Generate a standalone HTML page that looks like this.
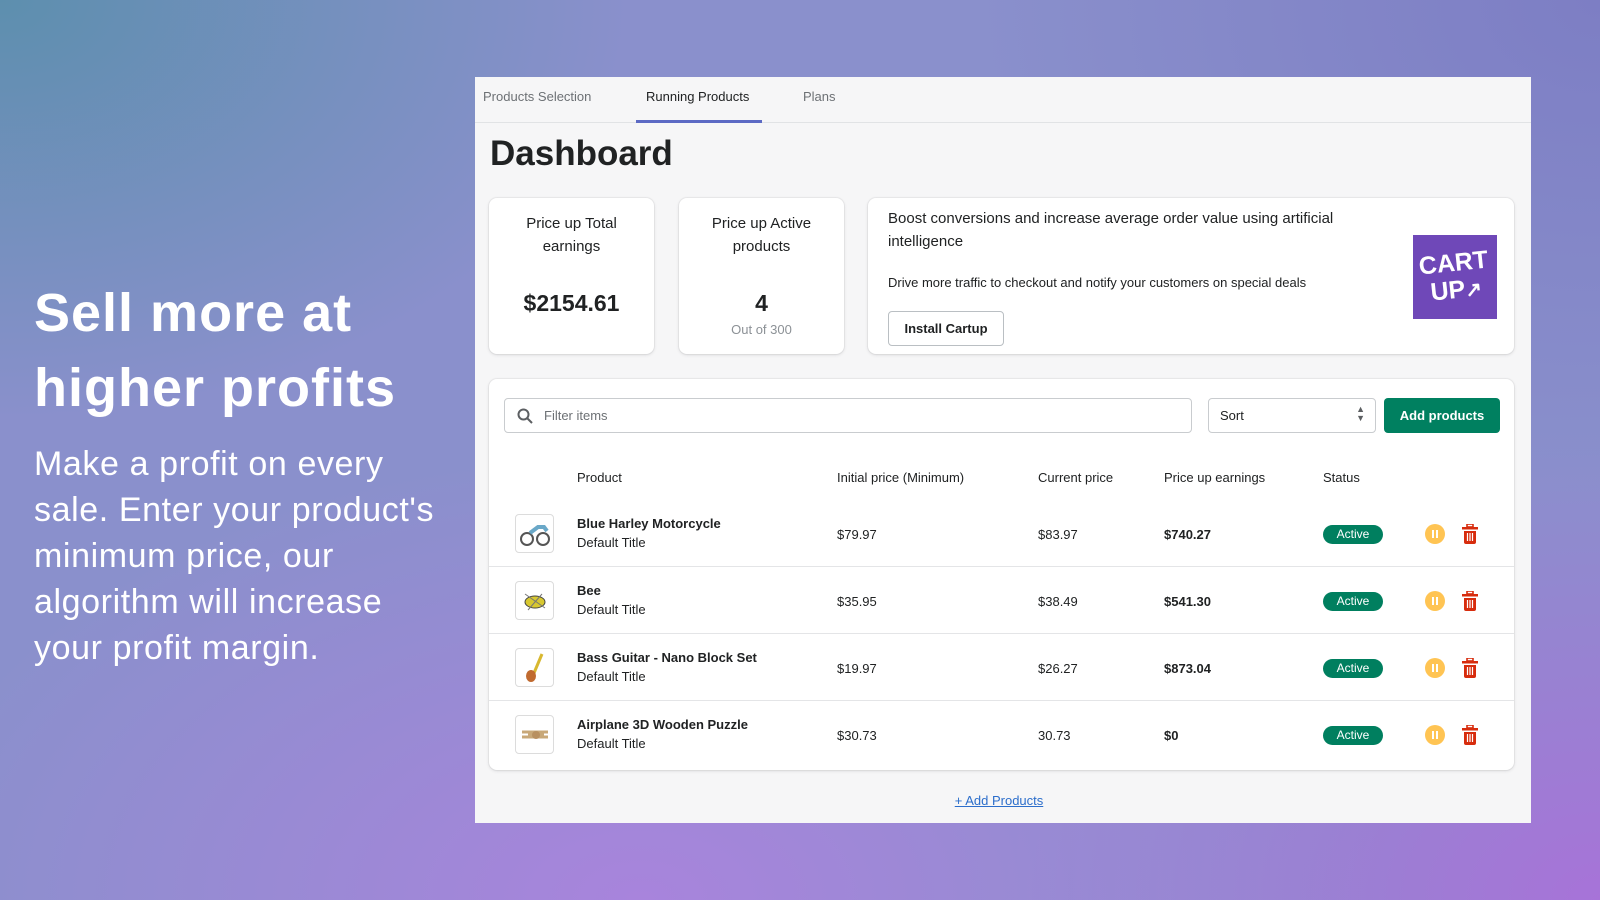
<!DOCTYPE html>
<html><head><meta charset="utf-8"><style>
*{margin:0;padding:0;box-sizing:border-box}
body{width:1600px;height:900px;overflow:hidden;font-family:"Liberation Sans",sans-serif;position:relative;
background:
radial-gradient(ellipse 900px 600px at 0% 0%, #5d8fae 0%, rgba(93,143,174,0) 70%),
radial-gradient(ellipse 900px 700px at 100% 0%, #7d7ec4 0%, rgba(125,126,196,0) 70%),
radial-gradient(ellipse 1000px 600px at 40% 100%, #a884dc 0%, rgba(168,132,220,0) 75%),
radial-gradient(ellipse 800px 600px at 100% 100%, #a773d8 0%, rgba(167,115,216,0) 75%),
#8a90cc;}
.abs{position:absolute}
.h1{left:34px;top:276px;color:#fff;font-weight:bold;font-size:54px;line-height:75px;letter-spacing:1px}
.p{left:34px;top:441px;color:#fff;font-size:34px;line-height:46px;white-space:nowrap;letter-spacing:0.6px}
.panel{left:475px;top:77px;width:1056px;height:746px;background:#f6f6f7}
.tabs{position:absolute;left:0;top:0;width:100%;height:46px;border-bottom:1px solid #e1e3e5;font-size:13px;color:#6d7175}
.tab{position:absolute;top:12px}
.card{position:absolute;background:#fff;border-radius:8px;box-shadow:0 0 0 1px rgba(63,63,68,.05),0 1px 3px rgba(63,63,68,.15)}
.ct{text-align:center;color:#202223;font-size:15px;line-height:23px}
.th{position:absolute;top:91px;font-size:13px;color:#202223}
.row{position:absolute;left:0;width:1025px;height:67px}
.cell{position:absolute;font-size:13px;color:#202223}
.thumb{position:absolute;left:26px;width:39px;height:39px;border:1px solid #dcdcdc;border-radius:4px;background:#fff}
.badge{position:absolute;left:834px;width:60px;height:19px;border-radius:10px;background:#007f5f;color:#fff;font-size:12px;text-align:center;line-height:19px}
.pause{position:absolute;left:936px;width:20px;height:20px;border-radius:50%;background:#ffc453}
.pause:before,.pause:after{content:"";position:absolute;top:6px;width:2px;height:8px;background:#fff}
.pause:before{left:7px}.pause:after{left:11px}
.trash{position:absolute;left:973px}
.sep{position:absolute;left:0;right:0;height:1px;background:#e4e5e7}
</style></head><body>
<div class="abs h1">Sell more at<br>higher profits</div>
<div class="abs p">Make a profit on every<br>sale. Enter your product's<br>minimum price, our<br>algorithm will increase<br>your profit margin.</div>

<div class="abs panel">
 <div class="tabs">
  <div class="tab" style="left:8px">Products Selection</div>
  <div class="tab" style="left:171px;color:#202223">Running Products</div>
  <div class="tab" style="left:328px">Plans</div>
  <div style="position:absolute;left:161px;top:43px;width:126px;height:3px;background:#5c6ac4"></div>
 </div>
 <div style="position:absolute;left:15px;top:57px;font-size:35px;font-weight:bold;color:#202223">Dashboard</div>

 <div class="card" style="left:14px;top:121px;width:165px;height:156px">
  <div class="ct" style="margin-top:14px">Price up Total<br>earnings</div>
  <div style="text-align:center;font-size:23px;font-weight:bold;color:#202223;margin-top:32px">$2154.61</div>
 </div>
 <div class="card" style="left:204px;top:121px;width:165px;height:156px">
  <div class="ct" style="margin-top:14px">Price up Active<br>products</div>
  <div style="text-align:center;font-size:23px;font-weight:bold;color:#202223;margin-top:32px">4</div>
  <div style="text-align:center;font-size:13px;color:#8c9196;margin-top:5px">Out of 300</div>
 </div>
 <div class="card" style="left:393px;top:121px;width:646px;height:156px">
  <div style="position:absolute;left:20px;top:9px;width:480px;font-size:15px;line-height:23px;color:#202223">Boost conversions and increase average order value using artificial intelligence</div>
  <div style="position:absolute;left:20px;top:77px;font-size:13px;color:#202223">Drive more traffic to checkout and notify your customers on special deals</div>
  <div style="position:absolute;left:20px;top:113px;width:116px;height:35px;border:1px solid #babfc3;border-radius:4px;font-size:13px;font-weight:bold;color:#202223;text-align:center;line-height:33px">Install Cartup</div>
  <div style="position:absolute;left:545px;top:37px;width:84px;height:84px;background:#6f48b8;color:#fff;font-weight:bold;font-size:25px;line-height:27px;text-align:center;padding-top:15px">
   <div style="transform:rotate(-6deg)">CART<br>UP<span style="font-size:20px">↗</span></div></div>
 </div>

 <div class="card" style="left:14px;top:302px;width:1025px;height:391px">
  <div style="position:absolute;left:15px;top:19px;width:688px;height:35px;border:1px solid #c9cccf;border-radius:4px">
   <svg style="position:absolute;left:12px;top:9px" width="16" height="16" viewBox="0 0 16 16"><circle cx="6.5" cy="6.5" r="5" fill="none" stroke="#5c5f62" stroke-width="2"/><path d="M10 10l5 5" stroke="#5c5f62" stroke-width="2"/></svg>
   <span style="position:absolute;left:39px;top:9px;font-size:13px;color:#6d7175">Filter items</span>
  </div>
  <div style="position:absolute;left:719px;top:19px;width:168px;height:35px;border:1px solid #c9cccf;border-radius:4px;font-size:13px;color:#202223">
   <span style="position:absolute;left:11px;top:9px">Sort</span>
   <span style="position:absolute;right:10px;top:6px;font-size:9px;line-height:9px;color:#5c5f62">▲<br>▼</span>
  </div>
  <div style="position:absolute;left:895px;top:19px;width:116px;height:35px;border-radius:4px;background:#008060;color:#fff;font-size:13px;font-weight:bold;text-align:center;line-height:35px">Add products</div>

  <div class="th" style="left:88px">Product</div>
  <div class="th" style="left:348px">Initial price (Minimum)</div>
  <div class="th" style="left:549px">Current price</div>
  <div class="th" style="left:675px">Price up earnings</div>
  <div class="th" style="left:834px">Status</div>

  <div class="row" style="top:122px">
   <div class="thumb" style="top:13px"><svg width="37" height="37"><circle cx="11" cy="24" r="6" fill="none" stroke="#555" stroke-width="2"/><circle cx="27" cy="24" r="6" fill="none" stroke="#555" stroke-width="2"/><path d="M14 18l8-6h6l3 4" stroke="#6aa8c8" stroke-width="4" fill="none"/></svg></div>
   <div class="cell" style="left:88px;top:15px;font-weight:bold">Blue Harley Motorcycle</div>
   <div class="cell" style="left:88px;top:34px">Default Title</div>
   <div class="cell" style="left:348px;top:26px">$79.97</div>
   <div class="cell" style="left:549px;top:26px">$83.97</div>
   <div class="cell" style="left:675px;top:26px;font-weight:bold">$740.27</div>
   <div class="badge" style="top:24px">Active</div>
   <div class="pause" style="top:23px"></div>
   <svg class="trash" style="top:23px" width="16" height="20" viewBox="0 0 16 20"><rect x="5" y="0" width="6" height="3" fill="none" stroke="#d72c0d" stroke-width="1.6"/><rect x="0" y="3" width="16" height="2.5" fill="#d72c0d"/><path d="M2 7h12v11a2 2 0 0 1-2 2H4a2 2 0 0 1-2-2z" fill="#d72c0d"/><path d="M5.5 9v8M8 9v8M10.5 9v8" stroke="#fff" stroke-width="1.2"/></svg>
  </div>
  <div class="sep" style="top:187px"></div>
  <div class="row" style="top:189px">
   <div class="thumb" style="top:13px"><svg width="37" height="37"><ellipse cx="19" cy="20" rx="10" ry="6" fill="#d8c830" stroke="#444"/><path d="M9 12l20 14M12 28l14-16" stroke="#777"/></svg></div>
   <div class="cell" style="left:88px;top:15px;font-weight:bold">Bee</div>
   <div class="cell" style="left:88px;top:34px">Default Title</div>
   <div class="cell" style="left:348px;top:26px">$35.95</div>
   <div class="cell" style="left:549px;top:26px">$38.49</div>
   <div class="cell" style="left:675px;top:26px;font-weight:bold">$541.30</div>
   <div class="badge" style="top:24px">Active</div>
   <div class="pause" style="top:23px"></div>
   <svg class="trash" style="top:23px" width="16" height="20" viewBox="0 0 16 20"><rect x="5" y="0" width="6" height="3" fill="none" stroke="#d72c0d" stroke-width="1.6"/><rect x="0" y="3" width="16" height="2.5" fill="#d72c0d"/><path d="M2 7h12v11a2 2 0 0 1-2 2H4a2 2 0 0 1-2-2z" fill="#d72c0d"/><path d="M5.5 9v8M8 9v8M10.5 9v8" stroke="#fff" stroke-width="1.2"/></svg>
  </div>
  <div class="sep" style="top:254px"></div>
  <div class="row" style="top:256px">
   <div class="thumb" style="top:13px"><svg width="37" height="37"><path d="M26 5L18 24" stroke="#d8b830" stroke-width="3"/><ellipse cx="15" cy="27" rx="5" ry="6" fill="#c06a30"/></svg></div>
   <div class="cell" style="left:88px;top:15px;font-weight:bold">Bass Guitar - Nano Block Set</div>
   <div class="cell" style="left:88px;top:34px">Default Title</div>
   <div class="cell" style="left:348px;top:26px">$19.97</div>
   <div class="cell" style="left:549px;top:26px">$26.27</div>
   <div class="cell" style="left:675px;top:26px;font-weight:bold">$873.04</div>
   <div class="badge" style="top:24px">Active</div>
   <div class="pause" style="top:23px"></div>
   <svg class="trash" style="top:23px" width="16" height="20" viewBox="0 0 16 20"><rect x="5" y="0" width="6" height="3" fill="none" stroke="#d72c0d" stroke-width="1.6"/><rect x="0" y="3" width="16" height="2.5" fill="#d72c0d"/><path d="M2 7h12v11a2 2 0 0 1-2 2H4a2 2 0 0 1-2-2z" fill="#d72c0d"/><path d="M5.5 9v8M8 9v8M10.5 9v8" stroke="#fff" stroke-width="1.2"/></svg>
  </div>
  <div class="sep" style="top:321px"></div>
  <div class="row" style="top:323px">
   <div class="thumb" style="top:13px"><svg width="37" height="37"><path d="M6 16h26M6 21h26M12 18h16" stroke="#c8a878" stroke-width="3"/><circle cx="20" cy="19" r="4" fill="#b89060"/></svg></div>
   <div class="cell" style="left:88px;top:15px;font-weight:bold">Airplane 3D Wooden Puzzle</div>
   <div class="cell" style="left:88px;top:34px">Default Title</div>
   <div class="cell" style="left:348px;top:26px">$30.73</div>
   <div class="cell" style="left:549px;top:26px">30.73</div>
   <div class="cell" style="left:675px;top:26px;font-weight:bold">$0</div>
   <div class="badge" style="top:24px">Active</div>
   <div class="pause" style="top:23px"></div>
   <svg class="trash" style="top:23px" width="16" height="20" viewBox="0 0 16 20"><rect x="5" y="0" width="6" height="3" fill="none" stroke="#d72c0d" stroke-width="1.6"/><rect x="0" y="3" width="16" height="2.5" fill="#d72c0d"/><path d="M2 7h12v11a2 2 0 0 1-2 2H4a2 2 0 0 1-2-2z" fill="#d72c0d"/><path d="M5.5 9v8M8 9v8M10.5 9v8" stroke="#fff" stroke-width="1.2"/></svg>
  </div>
 </div>
 <div style="position:absolute;left:0;width:100%;top:716px;text-align:center;font-size:13px;color:#2c6ecb;text-decoration:underline;padding-right:8px">+ Add Products</div>
</div>
</body></html>
